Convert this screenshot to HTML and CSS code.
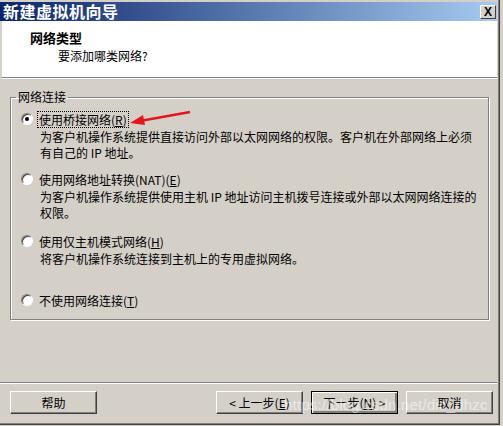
FILE: index.html
```html
<!DOCTYPE html>
<html>

<head>
    <link rel="stylesheet" href="styles.css">
</head>

<body>
    <div class="window">
        <div class="titlebar">
            <div class="titleText">新建虚拟机向导</div>
            <div class="closeBtn"><b>X</b></div>
        </div>
        <div class="header">
            <div class="headTitle">网络类型</div>
            <div class="headSub">要添加哪类网络?</div>
        </div>
        <div class="content">
            <fieldset class="group">
                <legend>网络连接</legend>
                <div class="option opt1">
                    <div class="radioRow"><span class="radio checked"></span><span class="focusLabel">使用桥接网络(<u>R</u>)</span></div>
                    <div class="desc">为客户机操作系统提供直接访问外部以太网网络的权限。客户机在外部网络上必须<br>有自己的 IP 地址。</div>
                </div>
                <div class="option opt2">
                    <div class="radioRow"><span class="radio"></span><span class="label">使用网络地址转换(NAT)(<u>E</u>)</span></div>
                    <div class="desc">为客户机操作系统提供使用主机 IP 地址访问主机拨号连接或外部以太网网络连接的<br>权限。</div>
                </div>
                <div class="option opt3">
                    <div class="radioRow"><span class="radio"></span><span class="label">使用仅主机模式网络(<u>H</u>)</span></div>
                    <div class="desc">将客户机操作系统连接到主机上的专用虚拟网络。</div>
                </div>
                <div class="option opt4">
                    <div class="radioRow"><span class="radio"></span><span class="label">不使用网络连接(<u>T</u>)</span></div>
                </div>
            </fieldset>
        </div>
        <div class="footer">
            <button class="btn">帮助</button>
            <div class="spacer"></div>
            <button class="btn">&lt; 上一步(<u>E</u>)</button>
            <button class="btn default">下一步(<u>N</u>) &gt;</button>
            <button class="btn">取消</button>
        </div>
        <svg class="arrow" width="70" height="20" viewBox="0 0 70 20">
            <line x1="62" y1="2" x2="12" y2="11" stroke="#e8141c" stroke-width="2.4" />
            <polygon points="2,13 15,5 17,15" fill="#e8141c" />
        </svg>
        <div class="watermark">https://blog.csdn.net/dic_dhzc</div>
    </div>
</body>

</html>
```

FILE: styles.css
```css
body {
    margin: 0;
    background: #d4d0c8;
    font-family: "Noto Sans CJK SC", "Liberation Sans", sans-serif;
    font-size: 12px;
    color: #000;
}

.window {
    position: relative;
    width: 499px;
    height: 422px;
    padding-top: 2px;
    background: #d4d0c8;
    border-right: 1px solid #404040;
    border-bottom: 1px solid #404040;
    box-shadow: inset -1px -1px 0 #808080;
}

.titlebar {
    position: relative;
    width: 497px;
    height: 19px;
    background: linear-gradient(to right, #0a246a, #a6caf0);
}

.titleText {
    color: #fff;
    font-weight: bold;
    font-size: 16px;
    line-height: 19px;
    padding-left: 3px;
    letter-spacing: 0.5px;
}

.closeBtn {
    position: absolute;
    right: 1px;
    top: 3px;
    box-sizing: border-box;
    width: 16px;
    height: 14px;
    background-color: #d4d0c8;
    border-style: solid;
    border-width: 1px;
    border-color: #ffffff #404040 #404040 #ffffff;
    color: #000;
    font-family: "Liberation Sans", sans-serif;
    font-size: 12px;
    line-height: 12px;
    text-align: center;
}

.header {
    height: 47px;
    margin: 0 2px 0 2px;
    padding-top: 9px;
    background: #fff;
    border-bottom: 1px solid #808080;
    box-shadow: 0 1px 0 #fff;
}

.headTitle {
    padding-left: 28px;
    font-weight: bold;
    font-size: 13px;
    line-height: 16px;
}

.headSub {
    padding-left: 56px;
    margin-top: 2px;
    line-height: 16px;
}

.content {
    height: 293px;
    padding: 10px 0 0 10px;
    margin-top: 1px;
}

.group {
    width: 477px;
    margin: 0;
    padding: 5px 0 10px 0;
    border: 1px solid #808080;
    box-shadow: 1px 1px 0 #fff, inset 1px 1px 0 #fff;
}

.group legend {
    padding: 0 2px;
    margin-left: 5px;
    line-height: 16px;
}

.radioRow {
    display: flex;
    align-items: center;
    height: 18px;
    padding-left: 10px;
}

.radio {
    width: 10px;
    height: 10px;
    border-radius: 50%;
    background: #fff;
    border: 1px solid;
    border-color: #808080 #fff #fff #808080;
    box-shadow: inset 1px 1px 0 #404040;
    margin-right: 4px;
    display: flex;
    align-items: center;
    justify-content: center;
}

.radio.checked::after {
    content: "";
    width: 4px;
    height: 4px;
    border-radius: 50%;
    background: #000;
}

.focusLabel {
    border: 1px dotted #000;
    padding: 0 1px;
    line-height: 15px;
}

.label {
    padding-left: 2px;
}

.desc {
    padding-left: 29px;
    line-height: 16px;
    margin-top: 1px;
}

.opt2 {
    margin-top: 9px;
}

.opt3 {
    margin-top: 11px;
}

.opt4 {
    margin-top: 24px;
}

.footer {
    display: flex;
    gap: 8px;
    margin: 0 2px 0 0;
    padding: 8px 0 0 10px;
    border-top: 1px solid #808080;
    box-shadow: inset 0 1px 0 #fff;
}

.spacer {
    flex: 1;
}

.btn {
    width: 87px;
    height: 23px;
    background: #d4d0c8;
    border: 1px solid;
    border-color: #fff #404040 #404040 #fff;
    box-shadow: inset -1px -1px 0 #808080;
    font-family: "Noto Sans CJK SC", "Liberation Sans", sans-serif;
    font-size: 12px;
    padding: 0;
}

.btn:last-child {
    margin-right: 4px;
}

.btn.default {
    border: 1px solid #000;
    box-shadow: inset 1px 1px 0 #fff, inset -2px -2px 0 #808080;
}

.arrow {
    position: absolute;
    left: 128px;
    top: 110px;
}

.watermark {
    position: absolute;
    left: 284px;
    top: 396px;
    font-family: "Liberation Sans", sans-serif;
    font-size: 15px;
    color: rgba(255, 255, 255, 0.55);
    letter-spacing: 0.2px;
}
```
